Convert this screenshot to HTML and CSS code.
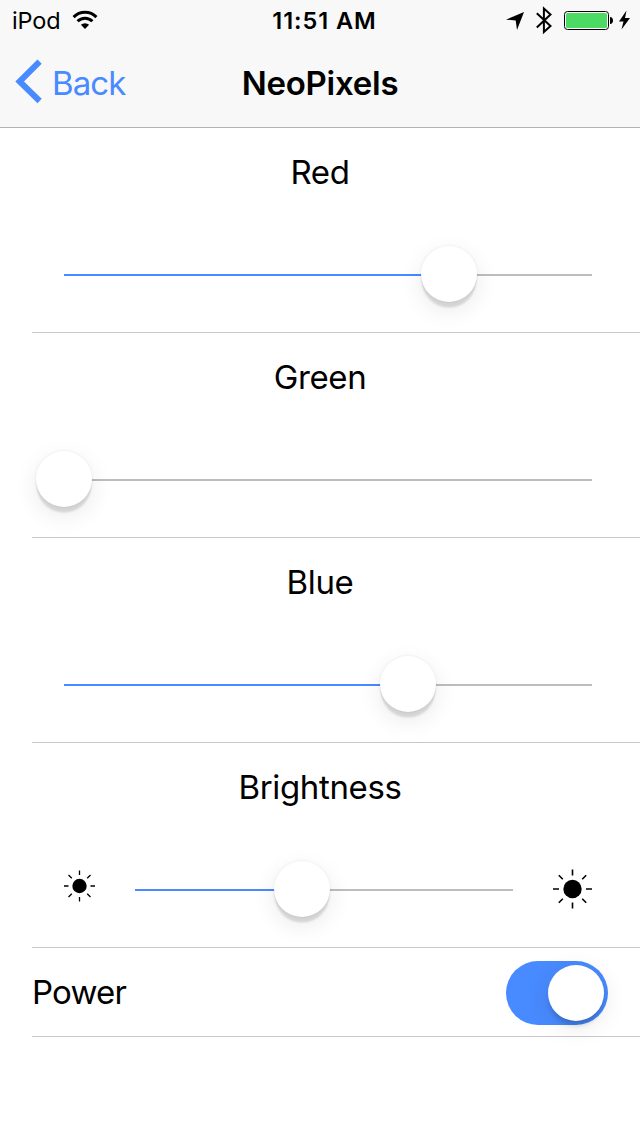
FILE: index.html
```html
<!DOCTYPE html>
<html lang="en">
<head>
<meta charset="utf-8">
<title>NeoPixels</title>
<link rel="stylesheet" href="styles.css">
</head>
<body>
<header class="header">
  <div class="status">
    <div class="status-left">
      <span class="carrier">iPod</span>
      <svg class="wifi" width="26" height="20" viewBox="0 0 26 20">
        <g fill="none" stroke="#000" stroke-width="3">
          <path d="M1.6 7.1A16 16 0 0 1 24.4 7.1"/>
          <path d="M5.6 11.3A10.4 10.4 0 0 1 20.4 11.3"/>
        </g>
        <path d="M13 19L8.9 14.8A6 6 0 0 1 17.1 14.8Z"/>
      </svg>
    </div>
    <span class="clock">11:51 AM</span>
    <svg class="status-right" width="130" height="40" viewBox="510 0 130 40">
      <path d="M524 12L517 30L515.7 20.5L506 19.7Z"/>
      <path d="M536.8 13.3L550.5 26L543.9 32V8.6L550.5 14.5L536.8 27.5" fill="none" stroke="#000" stroke-width="2"/>
      <rect x="564.5" y="11.5" width="44" height="18" rx="3" fill="#fff" stroke="#000"/>
      <rect x="566" y="13" width="41" height="15" rx="1.5" fill="#4cd964"/>
      <path d="M610 17C614 17 614 24 610 24Z"/>
      <path d="M626.5 10.5L619 21.5H623.5L621.5 29.5L630 18H625Z"/>
    </svg>
  </div>
  <div class="navbar">
    <div class="back">
      <svg width="28" height="44" viewBox="0 0 28 44"><path d="M24.6 1.6L4.6 21.5L24.6 41" fill="none" stroke="#488aff" stroke-width="6"/></svg>
      <span class="back-label">Back</span>
    </div>
    <h1 class="title"><span>NeoPixels</span></h1>
    <div></div>
  </div>
</header>
<main class="list">
  <section class="item">
    <div class="label">Red</div>
    <div class="slider"><div class="fill" style="width:385px"></div><div class="knob"></div><div class="track"></div></div>
  </section>
  <section class="item">
    <div class="label">Green</div>
    <div class="slider"><div class="fill" style="width:0px"></div><div class="knob"></div><div class="track"></div></div>
  </section>
  <section class="item">
    <div class="label">Blue</div>
    <div class="slider"><div class="fill" style="width:344px"></div><div class="knob"></div><div class="track"></div></div>
  </section>
  <section class="item">
    <div class="label">Brightness</div>
    <div class="range">
      <svg class="sun-small" width="31" height="32" viewBox="-15.5 -16 31 32">
        <circle r="7.2"/>
        <path d="M0-15.5V-11M0 11V15.5M-15.5 0H-11M11 0H15.5M-11-11L-7.7-7.7M11-11L7.7-7.7M-11 11L-7.7 7.7M11 11L7.7 7.7" stroke="#000" stroke-width="1.3"/>
      </svg>
      <div class="slider"><div class="fill" style="width:167px"></div><div class="knob"></div><div class="track"></div></div>
      <svg class="sun-large" width="39" height="40" viewBox="-19.5 -20 39 40">
        <circle r="9.2"/>
        <path d="M0-19.5V-13.5M0 13.5V19.5M-19.5 0H-13.5M13.5 0H19.5M-13.7-13.7L-9.7-9.7M13.7-13.7L9.7-9.7M-13.7 13.7L-9.7 9.7M13.7 13.7L9.7 9.7" stroke="#000" stroke-width="1.6"/>
      </svg>
    </div>
  </section>
  <section class="item power">
    <span class="power-label">Power</span>
    <div class="toggle"><div class="toggle-knob"></div></div>
  </section>
</main>
</body>
</html>
```
FILE: styles.css
```css
* { box-sizing: border-box; }
body {
  margin: 0;
  height: 1136px;
  background: #fff;
  color: #000;
  font-family: Inter, "Liberation Sans", sans-serif;
  font-size: 33px;
  overflow: hidden;
}
svg { display: block; flex: none; overflow: visible; }
.header {
  height: 128px;
  background: #f8f8f8;
  border-bottom: 1px solid #b2b2b2;
}
.status {
  display: grid;
  grid-template-columns: 1fr auto 1fr;
  align-items: center;
  height: 40px;
  font-size: 23.5px;
  line-height: 40px;
}
.status-left { display: flex; align-items: center; gap: 11px; padding-left: 12px; }
.carrier { padding-top: 2px; line-height: 38px; letter-spacing: -0.1px; }
.clock { padding: 2px 0 0 9px; line-height: 38px; font-weight: 600; letter-spacing: 0.95px; }
.status-right { justify-self: end; }
.navbar {
  display: grid;
  grid-template-columns: 1fr auto 1fr;
  align-items: center;
  height: 87px;
}
.back { display: flex; align-items: center; gap: 9px; padding-left: 15px; color: #488aff; margin-top: -4px; }
.back-label { padding-top: 2px; letter-spacing: -0.9px; }
.title { margin: -2px 0 0; font-size: 33px; font-weight: 600; line-height: 40px; letter-spacing: -0.25px; }
.item {
  height: 205px;
  margin-left: 32px;
  border-bottom: 1px solid #c8c7cc;
}
.label { height: 88px; padding-right: 32px; line-height: 88px; text-align: center; letter-spacing: -0.35px; }
.slider { display: flex; align-items: center; height: 56px; margin: 30px 48px 0 32px; }
.fill { height: 2px; margin-top: 2px; background: #488aff; }
.track { flex: 1; height: 2px; margin-top: 2px; background: #bdbdbd; }
.knob {
  position: relative;
  z-index: 1;
  flex: none;
  width: 56px;
  height: 56px;
  margin: 0 -28px;
  border-radius: 50%;
  background: #fff;
  box-shadow: 0 6px 2px -0.5px rgba(0,0,0,.12), 0 0 2px 1px rgba(0,0,0,.04), 0 8px 24px rgba(0,0,0,.09);
}
.range { display: flex; align-items: center; padding: 0 48px 0 32px; margin-top: 30px; }
.range .slider { flex: 1; margin: 0 40px; }
.sun-small { margin-top: -7px; }
.sun-large { margin-top: 0; }
.power {
  display: flex;
  align-items: center;
  justify-content: space-between;
  height: 89px;
  padding-right: 32px;
}
.power-label { letter-spacing: -0.8px; }
.toggle {
  display: flex;
  align-items: center;
  justify-content: flex-end;
  width: 102px;
  height: 64px;
  margin-top: 2px;
  padding: 4px;
  border-radius: 32px;
  background: #488aff;
}
.toggle-knob {
  width: 56px;
  height: 56px;
  border-radius: 50%;
  background: #fff;
  box-shadow: 0 6px 24px rgba(0,0,0,.1), 0 6px 5px -2px rgba(0,0,0,.18);
}
```
